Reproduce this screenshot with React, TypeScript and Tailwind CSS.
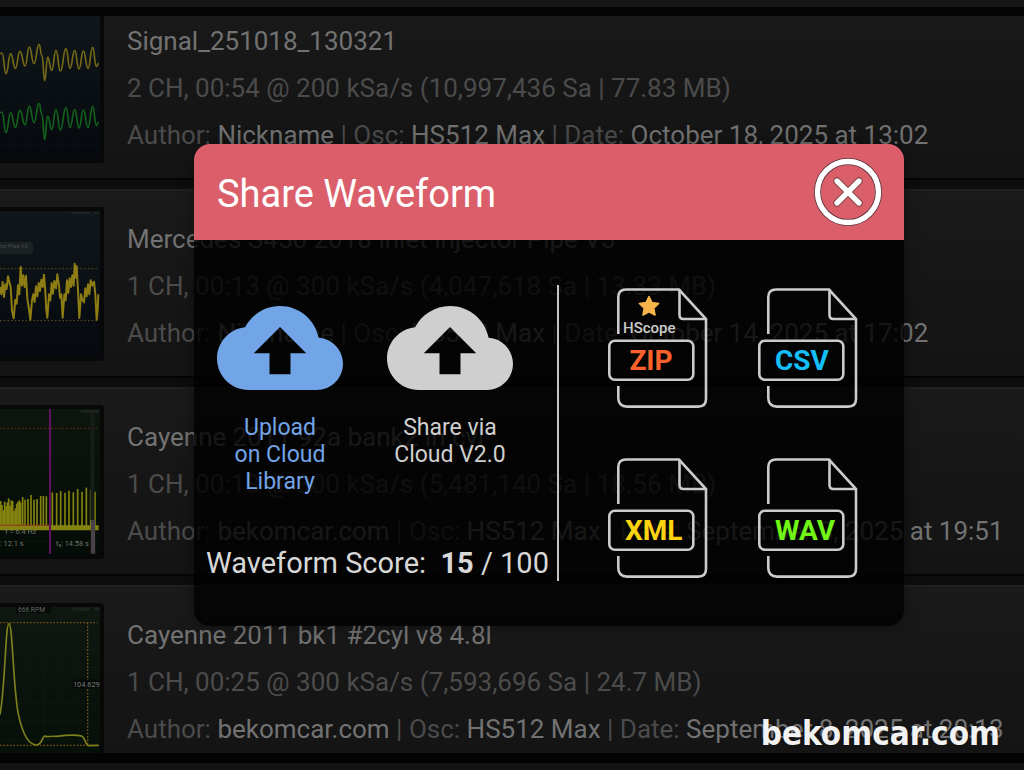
import type { ReactNode } from 'react';

type Point = [number, number];

interface Recording {
  title: string;
  info: string;
  author: string;
  osc: string;
  date: string;
  preview: ReactNode;
}

// Joins peaks and valleys with horizontal tangents
function smoothPath(points: Point[]) {
  return points
    .map(([x, y], i) => {
      if (i === 0) return `M${x} ${y}`;
      const [px, py] = points[i - 1];
      const mid = (px + x) / 2;
      return `C${mid} ${py} ${mid} ${y} ${x} ${y}`;
    })
    .join('');
}

const signalPoints: Point[] = [
  [0, 134], [6, 132], [18, 194], [32, 134], [46, 178], [60, 127], [75, 171], [88, 114], [102, 164],
  [117, 106], [126, 140], [134, 215], [143, 144], [155, 184], [168, 124], [181, 186], [198, 119],
  [210, 178], [224, 125], [237, 180], [250, 126], [264, 178], [278, 115], [289, 172], [296, 163],
];

const injectorPoints =
  '0,240 4,262 8,225 12,270 16,232 20,246 24,208 28,225 32,240 36,310 41,334 46,278 50,290 54,235 58,262 62,180 66,236 70,205 74,240 78,206 82,275 86,300 91,338 96,280 100,262 104,285 108,238 112,268 116,228 120,252 124,218 128,240 132,203 136,255 139,310 142,332 147,262 151,280 155,228 159,260 163,222 168,244 172,202 177,236 180,272 184,262 188,332 193,262 197,280 201,220 205,258 209,214 213,240 217,205 221,236 224,170 228,212 230,178 234,250 238,333 243,262 247,278 252,286 256,244 260,268 264,232 268,262 272,220 277,236 282,224 286,262 290,338 293,310 295,262';

const denseBars = [288, 300, 316, 290, 304, 292, 280, 302, 286, 288, 318, 310, 296, 290, 286, 292];
const spacedBars: Point[] = [
  [68, 276], [75, 284], [84, 282], [93, 270], [102, 284], [111, 282], [122, 273], [130, 273], [139, 274],
  [157, 262], [170, 264], [182, 258], [195, 263], [207, 257], [220, 262], [233, 252], [246, 260], [259, 248],
  [272, 254], [285, 260],
];

function Grid({ color }: { color: string }) {
  return (
    <g stroke={color} strokeWidth="2">
      <path d="M0 86H300M0 140H300M0 194H300M0 248H300M0 302H300M0 356H300M0 410H300" opacity=".6" />
      <path d="M28 12V440M80 12V440M132 12V440M184 12V440M236 12V440" opacity=".4" />
    </g>
  );
}

function Preview({ from, to, children }: { from: string; to: string; children: ReactNode }) {
  return (
    <div className={`h-[154px] w-[104px] shrink-0 rounded-r-sm border-y-4 border-r-4 border-[#080808] bg-linear-to-b ${from} ${to}`}>
      <svg viewBox="0 12 300 438" className="block h-full w-full" fill="none" aria-hidden="true">
        {children}
      </svg>
    </div>
  );
}

const recordings: Recording[] = [
  {
    title: 'Signal_251018_130321',
    info: '2 CH, 00:54 @ 200 kSa/s (10,997,436 Sa | 77.83 MB)',
    author: 'Nickname',
    osc: 'HS512 Max',
    date: 'October 18, 2025 at 13:02',
    preview: (
      <Preview from="from-[#10171a]" to="to-[#06090e]">
        <Grid color="#101b22" />
        <path d={smoothPath(signalPoints)} stroke="#756a17" strokeWidth="5" />
        <path d={smoothPath(signalPoints.map(([x, y]) => [x, y + 177]))} stroke="#13611c" strokeWidth="5" />
      </Preview>
    ),
  },
  {
    title: 'Mercedes S450 2018 inlet injector Pipe V3',
    info: '1 CH, 00:13 @ 300 kSa/s (4,047,618 Sa | 13.33 MB)',
    author: 'Nickname',
    osc: 'HS512 Max',
    date: 'October 14, 2025 at 17:02',
    preview: (
      <Preview from="from-[#10171a]" to="to-[#06090e]">
        <Grid color="#101b22" />
        <rect x="-10" y="104" width="109" height="38" rx="6" fill="#1b2023" />
        <text x="0" y="124" fill="#4b4e50" fontSize="17" fontFamily="Roboto, sans-serif">tor Pipe V3</text>
        <path d="M214 18H270M280 18H298" stroke="#1d2224" strokeWidth="6" />
        <path d="M0 185H296M0 341H296" stroke="#5d4d18" strokeWidth="3" strokeDasharray="5 6" />
        <polyline points={injectorPoints} stroke="#8d7d14" strokeWidth="6" strokeLinejoin="round" />
      </Preview>
    ),
  },
  {
    title: 'Cayenne 2011 92a bank2 in cyl',
    info: '1 CH, 00:18 @ 300 kSa/s (5,481,140 Sa | 18.56 MB)',
    author: 'bekomcar.com',
    osc: 'HS512 Max',
    date: 'September 8, 2025 at 19:51',
    preview: (
      <Preview from="from-[#0c150e]" to="to-[#050b06]">
        <Grid color="#0f2114" />
        <path d="M242 19H296" stroke="#1d221e" strokeWidth="8" />
        <path d="M0 70H296" stroke="#60331a" strokeWidth="3" strokeDasharray="5 6" />
        <g stroke="#85830f">
          {denseBars.map((top, i) => (
            <path key={i} d={`M${i * 4 + 2} ${top}V368`} strokeWidth="5" />
          ))}
          {spacedBars.map(([x, top]) => (
            <path key={x} d={`M${x} ${top}V368`} strokeWidth="5" />
          ))}
          <path d="M0 368H296" strokeWidth="15" />
        </g>
        <path d="M0 361H150" stroke="#92421b" strokeWidth="4" />
        <path d="M277 20V345" stroke="#161c18" strokeWidth="12" />
        <path d="M279 345V446" stroke="#484148" strokeWidth="13" />
        <path d="M150 12V446" stroke="#61135f" strokeWidth="6" />
        <g fill="#70756f" fontSize="22" fontFamily="Roboto, sans-serif">
          <text x="16" y="388">f = 6.4 Hz</text>
          <text x="0" y="422">: 12.1 s</text>
          <text x="168" y="422">t₂: 14.58 s</text>
        </g>
      </Preview>
    ),
  },
  {
    title: 'Cayenne 2011 bk1 #2cyl v8 4.8l',
    info: '1 CH, 00:25 @ 300 kSa/s (7,593,696 Sa | 24.7 MB)',
    author: 'bekomcar.com',
    osc: 'HS512 Max',
    date: 'September 8, 2025 at 20:13',
    preview: (
      <Preview from="from-[#0e1710]" to="to-[#061009]">
        <Grid color="#12261a" />
        <path d="M218 18H270M284 18H298" stroke="#1d221e" strokeWidth="10" />
        <rect x="48" y="12" width="106" height="18" fill="#070a08" />
        <text x="54" y="28" fill="#626762" fontSize="20" fontFamily="Roboto, sans-serif">666 RPM</text>
        <path d="M0 59H292M0 427H296M263 59V427" stroke="#775119" strokeWidth="4" strokeDasharray="5 5" />
        <path
          d="M0 335C16 250 16 62 27 62C38 62 40 270 56 338C68 392 84 424 108 426C126 428 126 402 134 399C140 404 150 398 170 400C200 396 235 396 247 400C256 406 256 426 266 428L296 427"
          stroke="#7e801d"
          strokeWidth="5"
        />
        <rect x="218" y="230" width="80" height="26" fill="#060907" />
        <text x="219" y="251" fill="#777b77" fontSize="22" fontFamily="Roboto, sans-serif">104.629</text>
      </Preview>
    ),
  },
];

function RecordingRow({ title, info, author, osc, date, preview }: Recording) {
  return (
    <li className="flex h-[198px] flex-col whitespace-nowrap">
      <div className="flex h-[187px] border-t-2 border-[#202020] bg-linear-to-b from-[#1a1a1a] via-[#161616] to-[#141414]">
        <div className="w-[127px] shrink-0 pt-4">{preview}</div>
        <div className="pt-[25px] text-[26px] leading-[47px] text-[#4b4b4b]">
          <h2 className="text-[#727272]">{title}</h2>
          <p>{info}</p>
          <p>
            Author: <span className="text-[#727272]">{author}</span> | Osc:{' '}
            <span className="text-[#727272]">{osc}</span> | Date: <span className="text-[#727272]">{date}</span>
          </p>
        </div>
      </div>
      <div className="grow border-t-2 border-[#050505] bg-[#0d0d0d]" />
    </li>
  );
}

function CloudButton({ label, color }: { label: ReactNode; color: string }) {
  return (
    <button type="button" className={`flex w-[170px] flex-col items-center ${color}`}>
      <svg viewBox="0 4 24 16" className="h-[84px] w-[126px]" fill="currentColor" aria-hidden="true">
        <path d="M19.35 10.04C18.67 6.59 15.64 4 12 4 9.11 4 6.6 5.64 5.35 8.04 2.34 8.36 0 10.91 0 14c0 3.31 2.69 6 6 6h13c2.76 0 5-2.24 5-5 0-2.64-2.05-4.78-4.65-4.96zM14 13v4h-4v-4H7l5-5 5 5h-3z" />
      </svg>
      <span className="mt-6 text-[23px] leading-[27px]">{label}</span>
    </button>
  );
}

interface FormatButtonProps {
  format: string;
  labelClass: string;
  branded?: boolean;
}

function FormatButton({ format, labelClass, branded = false }: FormatButtonProps) {
  return (
    <button type="button" className="relative h-[120px] w-[101px]">
      <svg
        viewBox="0 0 101 120"
        className="h-full w-full"
        fill="none"
        stroke="#cbcbcb"
        strokeWidth="2.6"
        aria-hidden="true"
      >
        <path d="M11.3 46V9Q11.3 1.5 19 1.5H72L99 31V111Q99 118.6 91 118.6H20Q11.3 118.6 11.3 110V98" />
        <path d="M72.5 1.5V27Q72.5 31 76.5 31H99" />
        <rect x="2.3" y="52.7" width="84" height="39" rx="5.5" />
        {branded && (
          <path
            d="M42 8.5L44.9 14.6L51.6 15.5L46.7 20.1L48 27L42 23.7L36 27L37.3 20.1L32.4 15.5L39.1 14.6Z"
            fill="#f6b44a"
            stroke="#f6b44a"
            strokeWidth="1.6"
            strokeLinejoin="round"
          />
        )}
      </svg>
      {branded && (
        <span className="absolute top-[30px] left-4 text-[15px] leading-5 font-medium text-[#cbcbcb]">HScope</span>
      )}
      <span className={`absolute top-[53px] left-0 w-[88px] text-[28px] leading-10 font-bold ${labelClass}`}>
        {format}
      </span>
    </button>
  );
}

function ShareDialog() {
  return (
    <section
      role="dialog"
      aria-labelledby="share-title"
      className="w-[710px] max-w-full overflow-hidden rounded-2xl shadow-[0_0_16px_rgba(0,0,0,0.35)]"
    >
      <header className="flex h-24 items-center justify-between bg-[#db5f6a] pr-[22px] pl-[23px] text-white">
        <h1 id="share-title" className="pt-1 text-[38px]">Share Waveform</h1>
        <button type="button" aria-label="Close">
          <svg viewBox="0 0 68 68" className="size-[68px]" fill="none" strokeLinecap="round">
            <g stroke="#5b3237" strokeWidth="7">
              <circle cx="34" cy="34" r="30.5" />
              <path d="M23 23L45 45M45 23L23 45" />
            </g>
            <g stroke="#fff" strokeWidth="5.4">
              <circle cx="34" cy="34" r="30.5" />
              <path d="M23 23L45 45M45 23L23 45" />
            </g>
          </svg>
        </button>
      </header>

      <div className="flex bg-black/80 py-[45px]">
        <div className="flex w-[363px] shrink-0 flex-col pt-[21px]">
          <div className="flex items-start pl-px">
            <CloudButton
              color="text-[#72a5e8]"
              label={<>Upload<br />on Cloud<br />Library</>}
            />
            <CloudButton
              color="text-[#cfcfcf]"
              label={<>Share via<br />Cloud V2.0</>}
            />
          </div>
          <p className="mt-auto pl-3 text-[29px] leading-9 whitespace-pre text-[#d8d8d8]">
            Waveform Score:{'  '}<b>15</b> / 100
          </p>
        </div>

        <div className="h-[296px] w-0.5 shrink-0 bg-[#c4c4c4]" />

        <div className="grid grow grid-cols-[auto_auto] place-content-center gap-x-[49px] gap-y-[50px] pl-0.5">
          <FormatButton format="ZIP" labelClass="text-center text-[#f9622b]" branded />
          <FormatButton format="CSV" labelClass="pl-[18px] text-left text-[#14bff8]" />
          <FormatButton format="XML" labelClass="pl-[18px] text-left text-[#fbd310]" />
          <FormatButton format="WAV" labelClass="pl-[18px] text-left text-[#70f516]" />
        </div>
      </div>
    </section>
  );
}

export default function App() {
  return (
    <div className="relative flex h-screen flex-col overflow-hidden bg-[#040404] font-[Roboto,sans-serif]">
      {/* Bottom edge of the toolbar */}
      <div className="h-4 shrink-0 border-b-[9px] border-[#040404] bg-[#151515]" />

      {/* Recordings, scrolled slightly */}
      <main className="min-h-0 grow overflow-hidden">
        <ul className="-mt-[25px]">
          {recordings.map((recording) => (
            <RecordingRow key={recording.title} {...recording} />
          ))}
        </ul>
      </main>

      {/* Top edge of the footer */}
      <div className="h-[17px] shrink-0 border-t-[10px] border-[#040404] bg-[#131313]" />

      <div className="absolute inset-0 flex items-center justify-center pl-[74px]">
        <ShareDialog />
      </div>

      <p className="absolute right-6 bottom-4 font-['DejaVu_Sans_Condensed','DejaVu_Sans',sans-serif] text-[33px] leading-10 font-bold text-[#f2f2f2] [text-shadow:0_0_2px_#0008]">
        bekomcar.com
      </p>
    </div>
  );
}
